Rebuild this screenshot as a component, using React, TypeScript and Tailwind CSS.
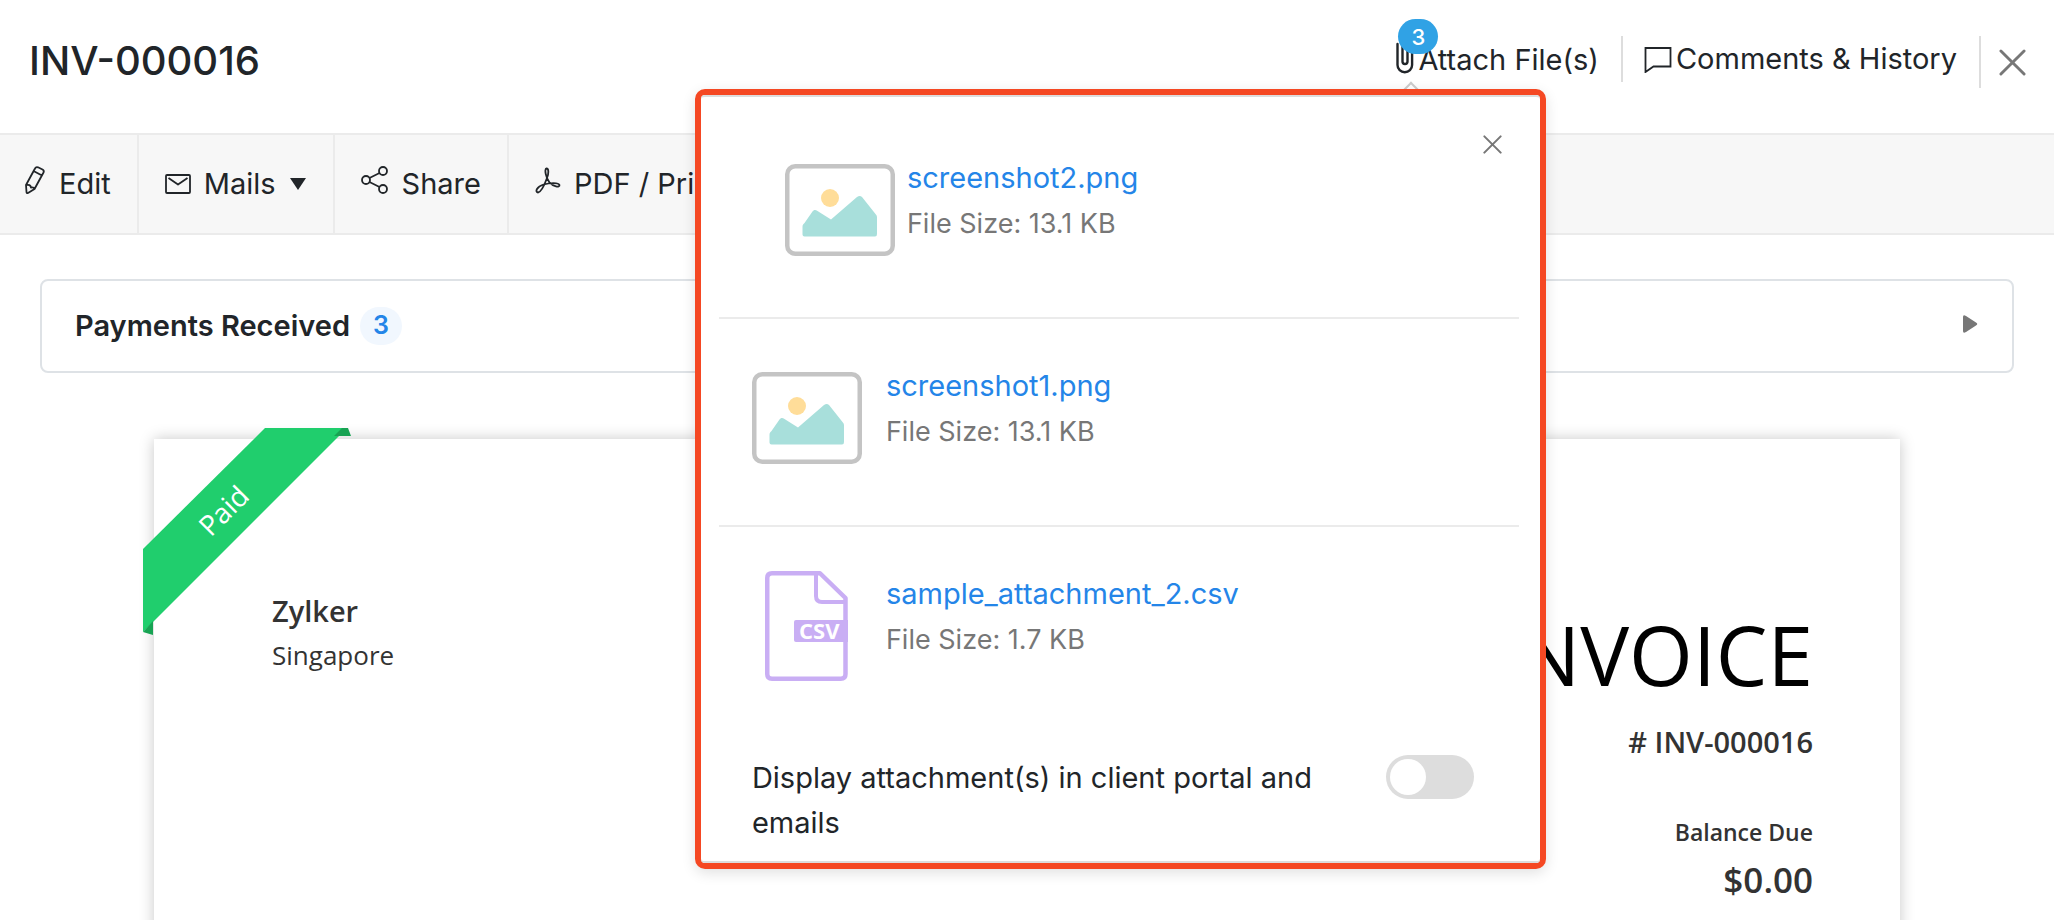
import { useState } from 'react'
import type { ReactNode } from 'react'

interface Attachment {
  name: string
  size: string
  kind: 'image' | 'csv'
  active?: boolean
}

const attachments: Attachment[] = [
  { name: 'screenshot2.png', size: '13.1 KB', kind: 'image', active: true },
  { name: 'screenshot1.png', size: '13.1 KB', kind: 'image' },
  { name: 'sample_attachment_2.csv', size: '1.7 KB', kind: 'csv' },
]

function PencilIcon() {
  return (
    <svg width="22" height="30" viewBox="0 0 22 30" fill="none" stroke="currentColor" strokeWidth="1.8" strokeLinejoin="round">
      <path d="M2 20 11 3.5Q12 1.5 14 2.3L18.5 4.500Q20.500 5.500 19.500 7.500L10.500 24 4 28Q2.500 28.500 2.500 27ZM9.500 6 18 10.500M2 20Q6.500 19 7 22.500 10 22 10.500 24" />
    </svg>
  )
}

function MailIcon() {
  return (
    <svg width="26" height="20" viewBox="0 0 26 20" fill="none" stroke="currentColor" strokeWidth="1.8" strokeLinejoin="round">
      <rect x="1" y="1" width="24" height="18" rx="1" />
      <path d="m3.500 4 9.500 6.500L22.500 4" />
    </svg>
  )
}

function ShareIcon() {
  return (
    <svg width="28" height="28" viewBox="0 0 28 28" fill="none" stroke="currentColor" strokeWidth="1.8">
      <circle cx="5" cy="14" r="4" />
      <circle cx="22" cy="5" r="4" />
      <circle cx="22" cy="23" r="4" />
      <path d="m8.500 12 10-5M8.500 16l10 5" />
    </svg>
  )
}

function PdfIcon() {
  return (
    <svg width="26" height="27" viewBox="0 0 26 27" fill="none" stroke="currentColor" strokeWidth="1.8" strokeLinejoin="round">
      <path d="M11.500 1.500c2.500 0 2.200 5.500.500 9.500C10 16.500 6.500 25 3 25.500c-3.500-.500-1-6 5.500-8 6-1.800 15-2.300 16 .500.500 3-6.500 1.500-10-2.500C11 11 9 2 11.500 1.500Z" />
    </svg>
  )
}

function ClipIcon() {
  return (
    <svg width="18" height="38" viewBox="0 0 18 38" fill="none" stroke="currentColor" strokeWidth="2.4" strokeLinecap="round">
      <path d="M1.500 8v21a7.300 7.300 0 0 0 14.600 0V7a5 5 0 0 0-9.600 0v18.500a2.500 2.500 0 0 0 5 0V10" />
    </svg>
  )
}

function CommentIcon() {
  return (
    <svg width="28" height="28" viewBox="0 0 28 28" fill="none" stroke="currentColor" strokeWidth="1.8">
      <path d="M1.500 3h25v18.500H9.500l-8 5.500Z" />
    </svg>
  )
}

function CrossIcon({ size }: { size: number }) {
  return (
    <svg width={size} height={size} viewBox="0 0 28 28" fill="none" stroke="#777" strokeWidth="3" strokeLinecap="round">
      <path d="m2 2 24 24M26 2 2 26" />
    </svg>
  )
}

function ImageFileIcon() {
  return (
    <svg width="110" height="92" viewBox="0 0 110 92" fill="none">
      <rect x="2.25" y="2.25" width="105.5" height="87.5" rx="8" stroke="#c4c4c4" strokeWidth="4.5" />
      <circle cx="45" cy="34" r="9" fill="#ffdd99" />
      <path
        d="M17.500 63c0-2 .500-2.500 2-4l8-11.500c1.500-2 3-2 5-.500L46 55.500 72 33c2-1.500 3.500-1.500 5 0l13.500 17q1.500 1.500 1.500 3v17q0 2.500-2 2.500H19.500q-2 0-2-2Z"
        fill="#a8dfdb"
      />
    </svg>
  )
}

function CsvFileIcon() {
  return (
    <svg width="84" height="110" viewBox="0 0 84 110" fill="none" stroke="#c9aef4" strokeWidth="4.5" strokeLinejoin="round">
      <path d="M7 2.250H55L80.500 27V103q0 4.750-4.750 4.750H7q-4.750 0-4.750-4.750V7Q2.250 2.250 7 2.250Z" />
      <path d="M51 3v22q0 6 6 6H81" strokeWidth="4" />
      <path d="M31 49H83V71H31q-2 0-2-2V51q0-2 2-2Z" fill="#c9aef4" stroke="none" />
      <text x="34" y="68" fontSize="22" fontWeight="700" fill="#fff" stroke="none" className="font-['Open_Sans',sans-serif]">
        CSV
      </text>
    </svg>
  )
}

function ToolbarItem({ icon, children }: { icon: ReactNode; children: ReactNode }) {
  return (
    <button
      type="button"
      className="flex items-center gap-[13px] border-r-2 border-[#ebebeb] px-[26px] whitespace-nowrap first:pl-6"
    >
      {icon}
      {children}
    </button>
  )
}

function AttachmentRow({ file }: { file: Attachment }) {
  return (
    <li
      className={`flex h-[208px] items-start border-b-2 border-[#ebebeb] last:border-b-0 ${
        file.active ? 'gap-3 pl-[66px]' : 'gap-6 pl-[33px]'
      }`}
    >
      <span className={`flex w-[110px] shrink-0 justify-center ${file.kind === 'csv' ? 'pt-11' : 'pt-[53px]'}`}>
        {file.kind === 'csv' ? <CsvFileIcon /> : <ImageFileIcon />}
      </span>
      <div className="pt-11">
        <a href="#" className="block text-[29px] leading-[46px] text-[#2485e8]">
          {file.name}
        </a>
        <p className="text-[27px] leading-[46px] text-[#777]">File Size: {file.size}</p>
      </div>
    </li>
  )
}

function AttachmentsPopup({ onClose }: { onClose: () => void }) {
  const [shared, setShared] = useState(false)

  return (
    <div className="absolute top-[53px] right-[75px] z-10 w-[851px] rounded-[10px] border-6 border-[#f54823] bg-white shadow-[0_4px_14px_rgba(0,0,0,0.12)]">
      <div className="rounded border-y-2 border-[#ddd] pr-[21px] pb-4 pl-[18px]">
        <button type="button" aria-label="Close attachments" onClick={onClose} className="absolute top-10 right-[38px]">
          <CrossIcon size={19} />
        </button>
        <ul className="pt-[14px]">
          {attachments.map((file) => (
            <AttachmentRow key={file.name} file={file} />
          ))}
        </ul>
        <label className="flex items-start justify-between pt-5 pr-[45px] pl-[33px] text-[29px] leading-[45px]">
          <span className="w-[580px]">Display attachment(s) in client portal and emails</span>
          <input
            type="checkbox"
            role="switch"
            checked={shared}
            onChange={(e) => setShared(e.target.checked)}
            className="flex h-11 w-22 shrink-0 appearance-none items-center rounded-full bg-[#ddd] px-1 before:size-9 before:rounded-full before:bg-white checked:justify-end checked:bg-[#2485e8]"
          />
        </label>
      </div>
    </div>
  )
}

function PaidRibbon() {
  return (
    <div className="absolute -top-[11px] -left-[11px] h-[207px] w-[208px]">
      <svg width="208" height="207" viewBox="0 0 208 207">
        <path d="M122 0H204L0 204V121Z" fill="#20ce6d" />
        <path d="M199 0h6l3 8h-17ZM10 193v14L0 204Z" fill="#18a353" />
      </svg>
      <span className="absolute top-[60px] left-[40px] w-20 -rotate-45 text-center text-[28px] leading-[44px] text-white">
        Paid
      </span>
    </div>
  )
}

export default function App() {
  const [open, setOpen] = useState(true)

  return (
    <div className="h-screen overflow-hidden bg-white font-[Inter,sans-serif] text-[29px] text-[#212529]">
      <header className="flex h-[133px] items-start justify-between pt-9 pr-7 pl-[29px]">
        <h1 className="text-[40px] leading-[50px] font-medium">INV-000016</h1>
        <div className="flex items-start">
          <div className="relative border-r-2 border-[#ddd] pr-[22px]">
            <button
              type="button"
              onClick={() => setOpen(!open)}
              className="flex h-[46px] items-center gap-1 leading-none"
            >
              <span className="pb-2">
                <ClipIcon />
              </span>
              Attach File(s)
            </button>
            <span className="absolute -top-[17px] left-[2px] flex h-[35px] w-10 items-center justify-center rounded-full bg-[#30a2e5] text-[22px] leading-none font-medium text-white">
              3
            </span>
            <span className="absolute top-[48px] left-[9px] size-3 rotate-45 border-t-2 border-l-2 border-[#ccc] bg-white" />
            {open && <AttachmentsPopup onClose={() => setOpen(false)} />}
          </div>
          <button type="button" className="flex h-[46px] items-center gap-1 pr-[22px] pl-[21px]">
            <CommentIcon />
            Comments &amp; History
          </button>
          <div className="flex h-[52px] items-center border-l-2 border-[#ddd] pl-[18px]">
            <button type="button" aria-label="Close">
              <CrossIcon size={27} />
            </button>
          </div>
        </div>
      </header>

      <nav className="flex h-[102px] border-y-2 border-[#ebebeb] bg-[#f7f7f7]">
        <ToolbarItem icon={<span className="pb-2"><PencilIcon /></span>}>Edit</ToolbarItem>
        <ToolbarItem icon={<MailIcon />}>
          Mails
          <svg width="18" height="14" viewBox="0 0 18 14">
            <path d="M1 1h16L9 13Z" fill="currentColor" />
          </svg>
        </ToolbarItem>
        <ToolbarItem icon={<span className="pb-2"><ShareIcon /></span>}>Share</ToolbarItem>
        <ToolbarItem icon={<span className="pb-2"><PdfIcon /></span>}>PDF / Print</ToolbarItem>
      </nav>

      <main>
        <section className="mx-10 mt-11 flex h-[94px] items-center rounded-lg border-2 border-[#dee2e6] pr-[34px] pl-[33px]">
          <h2 className="font-semibold">Payments Received</h2>
          <span className="ml-[10px] flex h-[38px] w-[42px] items-center justify-center rounded-full bg-[#f1f7fe] text-[25px] font-semibold text-[#2485e8]">
            3
          </span>
          <button type="button" aria-label="Show payments" className="ml-auto pb-1">
            <svg width="15" height="18" viewBox="0 0 15 18">
              <path d="M0 2Q0-1 3 1L13 7.500Q15.500 9 13 10.500L3 17Q0 19 0 16Z" fill="#777" />
            </svg>
          </button>
        </section>

        <article className="relative mx-[154px] mt-[66px] flex h-[700px] justify-between bg-white pr-[87px] pl-[118px] font-['Open_Sans',sans-serif] text-[#333] shadow-[0_0_14px_rgba(0,0,0,0.22)]">
          <PaidRibbon />
          <address className="pt-[149px] text-[26px] leading-[45px] not-italic">
            <strong className="block text-[29px] font-semibold">Zylker</strong>
            Singapore
          </address>
          <div className="pt-[157px] text-right font-semibold">
            <p className="text-[82px] leading-[116px] font-normal text-black">INVOICE</p>
            <p className="mt-[7px] text-[29px] leading-[45px]"># INV-000016</p>
            <p className="mt-[48px] text-[23px] leading-[40px]">Balance Due</p>
            <p className="text-[35px] leading-[56px]">$0.00</p>
          </div>
        </article>
      </main>
    </div>
  )
}
